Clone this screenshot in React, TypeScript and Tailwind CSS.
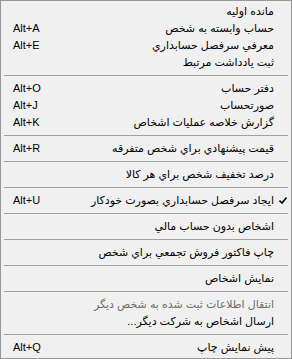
type Item =
  | { sep: true }
  | { sep?: false; label: string; shortcut?: string; checked?: boolean; disabled?: boolean }

const items: Item[] = [
  { label: 'مانده اوليه' },
  { label: 'حساب وابسته به شخص', shortcut: 'Alt+A' },
  { label: 'معرفي سرفصل حسابداري', shortcut: 'Alt+E' },
  { label: 'ثبت يادداشت مرتبط' },
  { sep: true },
  { label: 'دفتر حساب', shortcut: 'Alt+O' },
  { label: 'صورتحساب', shortcut: 'Alt+J' },
  { label: 'گزارش خلاصه عمليات اشخاص', shortcut: 'Alt+K' },
  { sep: true },
  { label: 'قيمت پيشنهادي براي شخص متفرقه', shortcut: 'Alt+R' },
  { sep: true },
  { label: 'درصد تخفيف شخص براي هر كالا' },
  { sep: true },
  { label: 'ايجاد سرفصل حسابداري بصورت خودكار', shortcut: 'Alt+U', checked: true },
  { sep: true },
  { label: 'اشخاص بدون حساب مالي' },
  { sep: true },
  { label: 'چاپ فاكتور فروش تجمعي براي شخص' },
  { sep: true },
  { label: 'نمايش اشخاص' },
  { sep: true },
  { label: 'انتقال اطلاعات ثبت شده به شخص ديگر', disabled: true },
  { label: 'ارسال اشخاص به شركت ديگر...' },
  { sep: true },
  { label: 'پيش نمايش چاپ', shortcut: 'Alt+Q' },
]

export default function App() {
  return (
    <div
      className="w-[292px] h-[359px] bg-[#f0f0f0] border border-[#979797] py-[2px] text-[11px] text-black"
      style={{ fontFamily: '"Liberation Sans", "DejaVu Sans", sans-serif' }}
    >
      {items.map((it, i) =>
        it.sep ? (
          <div key={i} className="h-[9px] flex items-center px-[3px]">
            <div className="h-px w-full bg-[#a0a0a0]" />
          </div>
        ) : (
          <div
            key={i}
            className={`h-[17px] flex items-center ${it.disabled ? 'text-[#6d6d6d]' : ''}`}
          >
            <span className="w-[60px] pl-[12px] leading-none">{it.shortcut}</span>
            <span dir="rtl" className="flex-1 text-right leading-none whitespace-nowrap">
              {it.label}
            </span>
            <span className="w-[17px] flex justify-center">
              {it.checked && (
                <svg width="8" height="7" viewBox="0 0 8 7">
                  <path d="M0.5 3.5 L3 6 L7.5 0.5" fill="none" stroke="#000" strokeWidth="1.6" />
                </svg>
              )}
            </span>
          </div>
        )
      )}
    </div>
  )
}
